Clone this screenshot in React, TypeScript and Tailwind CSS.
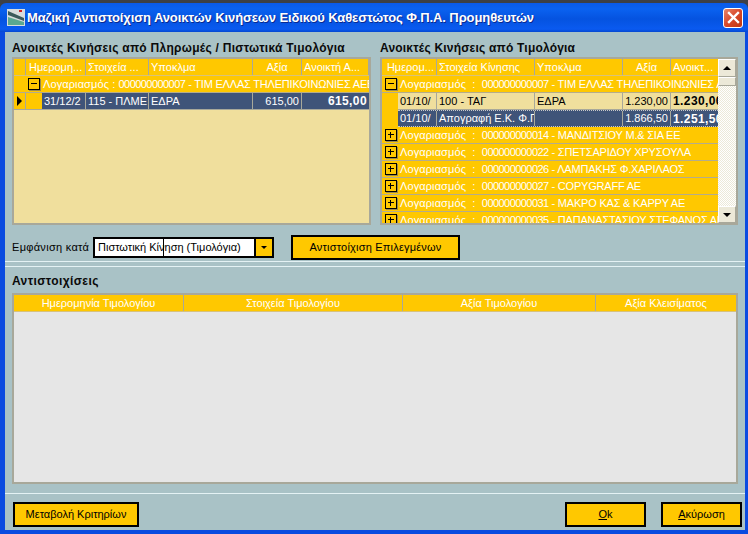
const font = "[font-family:'Liberation_Sans',sans-serif]";

type Col = { w: string; text: string; align?: string; bold?: boolean };

function Expander({ open }: { open?: boolean }) {
  return (
    <span className="relative w-[12px] h-[12px] shrink-0 border border-black bg-[#ffc800] shadow-[1px_1px_0_#9a8a50]">
      <span className="absolute left-[2px] top-[4px] w-[6px] h-[1px] bg-black" />
      {!open && <span className="absolute left-[4px] top-[2px] w-[1px] h-[6px] bg-black" />}
    </span>
  );
}

function Cell({ col, cls }: { col: Col; cls?: string }) {
  return (
    <div
      className={`${col.w} shrink-0 h-full px-[2px] flex items-center overflow-hidden whitespace-nowrap border-r border-[#a8a89a] ${col.align ?? ""} ${col.bold ? "font-bold text-[12px] tracking-[0.4px]" : ""} ${cls ?? ""}`}
    >
      {col.text}
    </div>
  );
}

function GroupRow({ label, num, name, open, pad }: { label: string; num: string; name: string; open?: boolean; pad: string }) {
  return (
    <div className={`h-[17px] shrink-0 flex items-center border-b border-[#b4ac8c] bg-[#ffc800] text-white text-[11px] whitespace-pre overflow-hidden ${pad}`}>
      <Expander open={open} />
      <span className="ml-[3px] tracking-[0.1px]">{label}</span>
      <span className="tracking-[-0.55px]">{num}</span>
      <span className="tracking-[-0.2px]">{name}</span>
    </div>
  );
}

function LeftGrid() {
  return (
    <div className="w-[359px] h-[168px] border-2 border-[#a8a89a] bg-[#f0df9d] flex flex-col overflow-hidden text-[11px]">
      <div className="h-[17px] shrink-0 flex text-white bg-[#ffc800] border-b border-[#d8c27a]">
        <div className="w-[12px] shrink-0 border-r border-[#a8a89a]" />
        <Cell col={{ w: "w-[60px]", text: "Ημερομη...", align: "pl-[3px]" }} />
        <Cell col={{ w: "w-[63px]", text: "Στοιχεία ..." }} />
        <Cell col={{ w: "w-[104px]", text: "Υποκλμα" }} />
        <Cell col={{ w: "w-[49px]", text: "Αξία", align: "justify-center" }} />
        <Cell col={{ w: "w-[67px]", text: "Ανοικτή Α..." }} />
      </div>
      <GroupRow label="Λογαριασμός : " num="000000000007" name=" - ΤΙΜ ΕΛΛΑΣ ΤΗΛΕΠΙΚΟΙΝΩΝΙΕΣ ΑΕΒ" open pad="pl-[14px]" />
      <div className="h-[17px] shrink-0 flex border-b border-[#a8a89a]">
        <div className="w-[12px] shrink-0 bg-[#ffc800] border-r border-[#a8a89a] flex items-center justify-center">
          <span className="w-0 h-0 border-y-[5px] border-y-transparent border-l-[5px] border-l-black" />
        </div>
        <div className="w-[16px] shrink-0 bg-[#ffc800]" />
        <div className="flex flex-1 bg-[#3f5479] text-white">
          <Cell col={{ w: "w-[44px]", text: "31/12/2" }} />
          <Cell col={{ w: "w-[63px]", text: "115 - ΠΛΜΕ" }} />
          <Cell col={{ w: "w-[104px]", text: "ΕΔΡΑ" }} />
          <Cell col={{ w: "w-[49px]", text: "615,00", align: "justify-end" }} />
          <Cell col={{ w: "w-[67px]", text: "615,00", align: "justify-end", bold: true }} cls="border-r-0" />
        </div>
      </div>
    </div>
  );
}

function ScrollBar() {
  return (
    <div className="w-[18px] shrink-0 flex flex-col bg-[#f1efe4] bg-[repeating-conic-gradient(#ece9d8_0%_25%,#fff_0%_50%)] bg-[length:2px_2px]">
      <div className="h-[18px] bg-[#ece9d8] border border-[#fff] border-r-[#a8a89a] border-b-[#a8a89a] flex items-center justify-center">
        <span className="w-0 h-0 border-x-[4px] border-x-transparent border-b-[4px] border-b-black" />
      </div>
      <div className="h-[9px] bg-[#ece9d8] border border-white border-r-[#a8a89a] border-b-[#a8a89a]" />
      <div className="flex-1" />
      <div className="h-[17px] bg-[#ece9d8] border border-[#fff] border-r-[#a8a89a] border-b-[#a8a89a] flex items-center justify-center">
        <span className="w-0 h-0 border-x-[4px] border-x-transparent border-t-[4px] border-t-black" />
      </div>
    </div>
  );
}

const accounts = [
  ["000000000014", " - ΜΑΝΔΙΤΣΙΟΥ Μ.& ΣΙΑ ΕΕ"],
  ["000000000022", " - ΣΠΕΤΣΑΡΙΔΟΥ ΧΡΥΣΟΥΛΑ"],
  ["000000000026", " - ΛΑΜΠΑΚΗΣ Φ.ΧΑΡΙΛΑΟΣ"],
  ["000000000027", " - COPYGRAFF AE"],
  ["000000000031", " - ΜΑΚΡΟ ΚΑΣ & ΚΑΡΡΥ ΑΕ"],
  ["000000000035", " - ΠΑΠΑΝΑΣΤΑΣΙΟΥ ΣΤΕΦΑΝΟΣ ΑΙ"],
];

function RightGrid() {
  return (
    <div className="w-[358px] h-[168px] border-2 border-[#a8a89a] flex overflow-hidden text-[11px]">
      <div className="flex-1 min-w-0 flex flex-col overflow-hidden">
        <div className="h-[17px] shrink-0 flex text-white bg-[#ffc800] border-b border-[#d8c27a]">
          <Cell col={{ w: "w-[55px]", text: "Ημερομ...", align: "justify-end" }} />
          <Cell col={{ w: "w-[98px]", text: "Στοιχεία Κίνησης" }} />
          <Cell col={{ w: "w-[88px]", text: "Υποκλμα" }} />
          <Cell col={{ w: "w-[48px]", text: "Αξία", align: "justify-center" }} />
          <Cell col={{ w: "w-[49px]", text: "Ανοικτ..." }} cls="border-r-0" />
        </div>
        <GroupRow label="Λογαριασμός  :  " num="000000000007" name=" - ΤΙΜ ΕΛΛΑΣ ΤΗΛΕΠΙΚΟΙΝΩΝΙΕΣ ΑΕ" open pad="pl-[3px]" />
        <div className="h-[17px] shrink-0 flex">
          <div className="w-[16px] shrink-0 bg-[#ffc800]" />
          <div className="flex flex-1 bg-[#f0df9d] text-black border-b border-[#a8a89a]">
            <Cell col={{ w: "w-[39px]", text: "01/10/" }} />
            <Cell col={{ w: "w-[98px]", text: "100 - ΤΑΓ" }} />
            <Cell col={{ w: "w-[88px]", text: "ΕΔΡΑ" }} />
            <Cell col={{ w: "w-[48px]", text: "1.230,00", align: "justify-end" }} />
            <Cell col={{ w: "w-[49px]", text: "1.230,00", bold: true }} cls="border-r-0" />
          </div>
        </div>
        <div className="h-[17px] shrink-0 flex">
          <div className="w-[16px] shrink-0 bg-[#ffc800]" />
          <div className="flex flex-1 bg-[#3f5479] text-white border-y border-dotted border-[#c8c8c8]">
            <Cell col={{ w: "w-[39px]", text: "01/10/" }} />
            <Cell col={{ w: "w-[98px]", text: "Απογραφή Ε.Κ. Φ.Π" }} />
            <Cell col={{ w: "w-[88px]", text: "" }} />
            <Cell col={{ w: "w-[48px]", text: "1.866,50", align: "justify-end" }} />
            <Cell col={{ w: "w-[49px]", text: "1.251,50", bold: true }} cls="border-r-0" />
          </div>
        </div>
        {accounts.map(([num, name]) => (
          <GroupRow key={num} label="Λογαριασμός  :  " num={num} name={name} pad="pl-[3px]" />
        ))}
      </div>
      <ScrollBar />
    </div>
  );
}

function YellowButton({ children, cls }: { children: React.ReactNode; cls: string }) {
  return (
    <button className={`${cls} shrink-0 h-[25px] border-2 border-black bg-[#ffc800] text-[11px] text-black flex items-center justify-center whitespace-nowrap`}>
      {children}
    </button>
  );
}

export default function App() {
  return (
    <div className={`w-[748px] h-[534px] overflow-hidden flex flex-col bg-[#3c4046] ${font}`}>
      <div className="h-[3px] shrink-0" />
      <div className="h-[29px] shrink-0 flex items-center pl-[7px] pr-[5px] rounded-t-[6px] bg-[linear-gradient(#0a5ae8,#0a62f0_20%,#0553e0_55%,#0a5af0_90%,#0648d0)]">
        <svg width="18" height="17" viewBox="0 0 18 17" className="shrink-0">
          <rect width="18" height="17" fill="#d8dcdc" />
          <path d="M1 2 L17 9 V12 L1 6 Z" fill="#3c5a5a" />
          <path d="M1 8 L17 13 V16 H1 Z" fill="#5aa890" />
          <rect x="12" y="1" width="3" height="2" fill="#d02020" />
        </svg>
        <span className="ml-[2px] flex-1 text-[13px] tracking-[-0.1px] font-bold text-white [text-shadow:1px_1px_0_#0a2a90] whitespace-nowrap">
          Μαζική Αντιστοίχιση Ανοικτών Κινήσεων Ειδικού Καθεστώτος Φ.Π.Α. Προμηθευτών
        </span>
        <div className="w-[20px] h-[20px] rounded-[3px] border border-white bg-[linear-gradient(135deg,#e8866a,#d8482a_50%,#c03810)] flex items-center justify-center">
          <svg width="13" height="13" viewBox="0 0 13 13">
            <path d="M2 2 L11 11 M11 2 L2 11" stroke="#fff" strokeWidth="2.4" strokeLinecap="square" />
          </svg>
        </div>
      </div>

      <div className="flex-1 flex flex-col bg-[#a9c2c6] border-l-[5px] border-r-[3px] border-b-[4px] border-[#0a4be0]">
        <div className="h-[230px] shrink-0 flex flex-col px-[7px] border-b border-[#e4f2f4]">
          <div className="flex pt-[7px] text-[12px] font-bold text-[#0a0a0a] h-[25px] whitespace-nowrap">
            <div className="w-[368px] tracking-[0.27px]">Ανοικτές Κινήσεις από Πληρωμές / Πιστωτικά Τιμολόγια</div>
            <div className="tracking-[0.2px]">Ανοικτές Κινήσεις από Τιμολόγια</div>
          </div>
          <div className="flex gap-[9px]">
            <LeftGrid />
            <RightGrid />
          </div>
          <div className="flex items-center mt-[10px] text-[11px] text-black">
            <span className="w-[81px] shrink-0 whitespace-nowrap tracking-[0.3px]">Εμφάνιση κατά</span>
            <div className="relative w-[181px] h-[21px] shrink-0 flex border-2 border-black bg-white">
              <span className="flex-1 px-[3px] flex items-center whitespace-nowrap overflow-hidden">Πιστωτική Κίνηση (Τιμολόγια)</span>
              <span className="w-[18px] bg-[#ffc800] border-l-2 border-black flex items-center justify-center">
                <span className="w-0 h-0 border-x-[3px] border-x-transparent border-t-[3px] border-t-black" />
              </span>
              <span className="absolute left-[68px] top-0 bottom-0 w-[1px] bg-black" />
            </div>
            <YellowButton cls="w-[169px] ml-[17px] tracking-[0.2px]">Αντιστοίχιση Επιλεγμένων</YellowButton>
          </div>
        </div>

        <div className="h-[228px] shrink-0 mt-[4px] flex flex-col px-[7px] border-t border-[#e4f2f4] border-b">
          <div className="h-[26px] shrink-0 flex items-center pt-[2px] text-[12px] font-bold tracking-[0.4px] text-[#0a0a0a]">Αντιστοιχίσεις</div>
          <div className="w-[726px] h-[191px] border-2 border-[#a8a89a] bg-[#e6e6e6] text-[11px] text-white">
            <div className="h-[17px] flex bg-[#ffc800] border-b border-[#d8c27a]">
              <div className="w-[170px] border-r border-[#a8a89a] flex items-center justify-center">Ημερομηνία Τιμολογίου</div>
              <div className="w-[219px] border-r border-[#a8a89a] flex items-center justify-center">Στοιχεία Τιμολογίου</div>
              <div className="w-[193px] border-r border-[#a8a89a] flex items-center justify-center">Αξία Τιμολογίου</div>
              <div className="flex-1 flex items-center justify-center">Αξία Κλεισίματος</div>
            </div>
          </div>
        </div>

        <div className="flex-1 flex items-start pt-[8px] pl-[8px] pr-[3px]">
          <YellowButton cls="w-[126px]">Μεταβολή Κριτηρίων</YellowButton>
          <div className="flex-1" />
          <YellowButton cls="w-[81px]"><span className="underline">O</span>k</YellowButton>
          <YellowButton cls="w-[81px] ml-[15px]"><span className="underline">Α</span>κύρωση</YellowButton>
        </div>
      </div>
    </div>
  );
}
